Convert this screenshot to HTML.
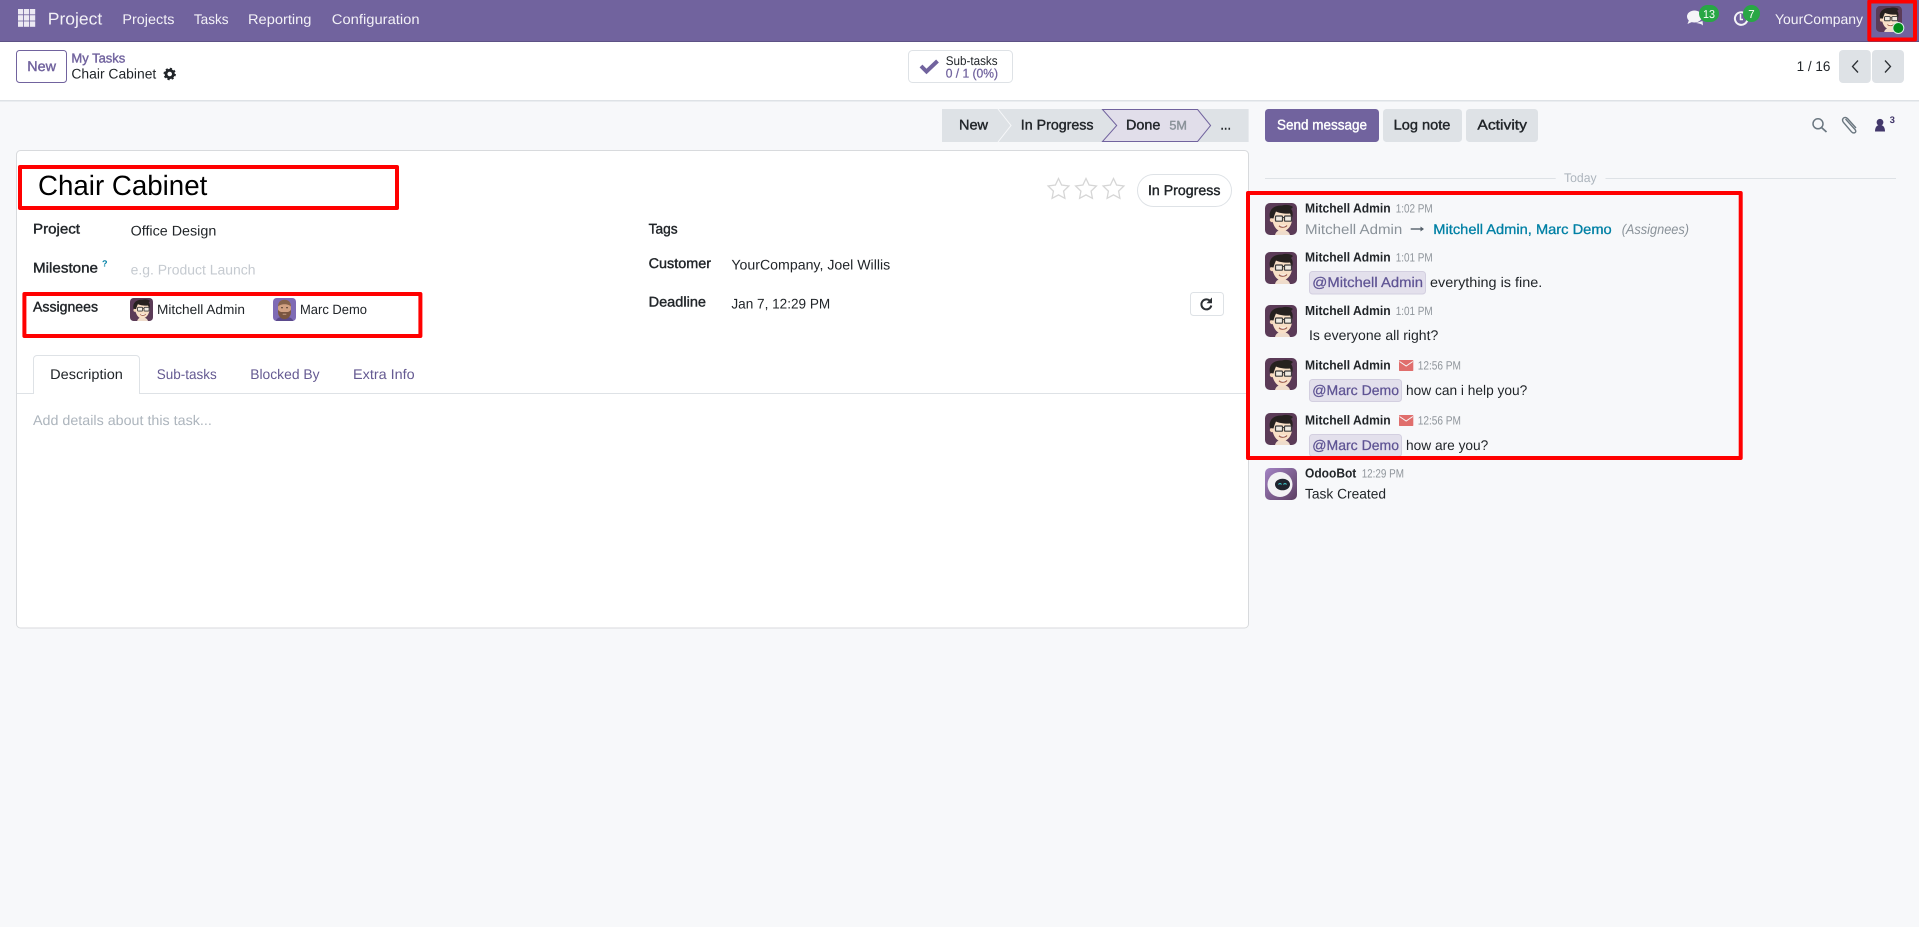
<!DOCTYPE html>
<html lang="en">
<head>
<meta charset="utf-8">
<title>Chair Cabinet - Project</title>
<style>
html,body{margin:0;padding:0;background:#f7f8fa;overflow:hidden;width:1919px;height:927px}
svg{display:block}
text{font-family:"Liberation Sans",sans-serif;font-size:14px;fill:#212529;white-space:pre;text-rendering:geometricPrecision}
.b{stroke:#212529;stroke-width:.4px}
.nav{fill:#f3f1f7;font-size:14px}
.p{fill:#71639e}
.p.b{stroke:#71639e}
.g{fill:#8a9299}
.g.b{stroke:#8a9299}
.w.b{fill:#fff;stroke:#fff}
.m{fill:#5f5494;stroke:#5f5494;stroke-width:.25px}
.t{font-size:12px;fill:#8f959b}
.n{font-size:13px;font-weight:700;fill:#212529}
</style>
</head>
<body>
<svg width="1919" height="927" viewBox="0 0 1919 927" xmlns="http://www.w3.org/2000/svg">
<defs>
<symbol id="mitchell" viewBox="0 0 32 32">
  <rect width="32" height="32" rx="5" fill="#5b3b57"/>
  <path d="M10 32 C11 28 14 27 17 27 C20 27 24 28 25 32 Z" fill="#efdccb"/>
  <circle cx="7" cy="17" r="2.200" fill="#f3d3b6"/>
  <path d="M7 13 C7 9 12 7 18 8 C24 8 27.500 10 27 16 C27 23 22 28.500 17 28.500 C11 28.500 7 21 7 13 Z" fill="#f8dfc6"/>
  <path d="M5 15 C3 7 9 2 17 2.500 C20 1.500 25 1.500 28 4 L26 6 C28 8 28 12 27 15 L25 10.500 C20 11 14 10 11 8.500 C10 11 9 13 8.500 15.500 Z" fill="#26211f"/>
  <rect x="10.500" y="13" width="7" height="5.200" rx="1" fill="#f0ebe2" stroke="#3b3b3b" stroke-width="1.200"/>
  <rect x="19.500" y="13" width="7" height="5.200" rx="1" fill="#f0ebe2" stroke="#3b3b3b" stroke-width="1.200"/>
  <path d="M17.500 14.500 H19.500" stroke="#3b3b3b" stroke-width="1"/>
  <path d="M14 22.800 C16 24.800 20 24.800 22 22.500" stroke="#9b5a4a" stroke-width="1.100" fill="#fff"/>
</symbol>
<symbol id="marc" viewBox="0 0 32 32">
  <rect width="32" height="32" rx="5" fill="#7f6bb5"/>
  <path d="M4 32 C5 27 11 26 16 26 C21 26 27 27 28 32 Z" fill="#5b4a8c"/>
  <path d="M7 12 C7 5 11 3 16 3 C21 3 25 5 25 12 L25 19 C25 25 20 29 16 29 C12 29 7 25 7 19 Z" fill="#d2a283"/>
  <path d="M7 16 C9 20 12 19.500 16 19.500 C20 19.500 23 20 25 16 L25 20 C25 26 20 29.500 16 29.500 C12 29.500 7 26 7 20 Z" fill="#7a5640"/>
  <path d="M7 12 C7 5 11 2.500 16 2.500 C21 2.500 25 5 25 12 C22 7.500 10 7.500 7 12 Z" fill="#85624b"/>
  <circle cx="12.500" cy="13.500" r="1" fill="#33231a"/><circle cx="19.500" cy="13.500" r="1" fill="#33231a"/>
  <path d="M13.500 22.500 H18.500" stroke="#e0b8a0" stroke-width="1"/>
</symbol>
<symbol id="bot" viewBox="0 0 32 32">
  <defs><linearGradient id="bg" x1="0" y1="0" x2="1" y2="1"><stop offset="0" stop-color="#a383c4"/><stop offset="1" stop-color="#5c3f62"/></linearGradient></defs>
  <rect width="32" height="32" rx="5" fill="url(#bg)"/>
  <circle cx="15" cy="16.500" r="12.500" fill="#f2f2f4"/>
  <ellipse cx="17.500" cy="16.500" rx="7.500" ry="5.800" fill="#20242e"/>
  <path d="M13.500 16.500 q1.500 -2 3 0 M18.500 16.500 q1.500 -2 3 0" stroke="#3cc5c9" stroke-width="1.100" fill="none"/>
</symbol>
<path id="star" d="M11 1 L14.100 7.500 L21.400 8.500 L16.100 13.600 L17.400 20.800 L11 17.400 L4.600 20.800 L5.900 13.600 L0.600 8.500 L7.900 7.500 Z"/>
<g id="mail"><rect width="14.300" height="11" rx="0.800" fill="#e06e6c"/><path d="M0.500 1.500 L7.150 6 L13.800 1.500" fill="none" stroke="#f7f8fa" stroke-width="1"/></g>
</defs>

<rect width="1919" height="927" fill="#f7f8fa"/>

<!-- Navbar -->
<rect width="1919" height="41" fill="#71639e"/>
<rect y="41" width="1919" height="1" fill="#5d5285"/>
<g fill="#ece9f3">
  <rect x="18" y="9" width="5.200" height="5.400"/><rect x="24" y="9" width="5.200" height="5.400"/><rect x="30" y="9" width="5.200" height="5.400"/>
  <rect x="18" y="15.200" width="5.200" height="5.400"/><rect x="24" y="15.200" width="5.200" height="5.400"/><rect x="30" y="15.200" width="5.200" height="5.400"/>
  <rect x="18" y="21.400" width="5.200" height="5.400"/><rect x="24" y="21.400" width="5.200" height="5.400"/><rect x="30" y="21.400" width="5.200" height="5.400"/>
</g>
<text class="nav" x="47.800" y="24.500" style="font-size:17px" textLength="54.500" lengthAdjust="spacingAndGlyphs">Project</text>
<text class="nav" x="122.400" y="24" textLength="52" lengthAdjust="spacingAndGlyphs">Projects</text>
<text class="nav" x="193.900" y="24" textLength="34.700" lengthAdjust="spacingAndGlyphs">Tasks</text>
<text class="nav" x="248" y="24" textLength="63.400" lengthAdjust="spacingAndGlyphs">Reporting</text>
<text class="nav" x="331.800" y="24" textLength="87.800" lengthAdjust="spacingAndGlyphs">Configuration</text>

<!-- Systray -->
<g fill="#f5f4f8">
  <ellipse cx="1694.500" cy="16.500" rx="7.500" ry="6"/>
  <path d="M1689 20 L1687.500 24 L1693 21.500 Z"/>
  <path d="M1696 23 C1699 23.500 1701 23.500 1703 25.500 L1702.500 21 Z"/>
</g>
<rect x="1699" y="5" width="20" height="17" rx="8.500" fill="#28a745"/>
<text x="1709" y="18" text-anchor="middle" style="font-size:11.500px;fill:#fff" textLength="12" lengthAdjust="spacingAndGlyphs">13</text>
<path d="M1745 13.500 A6.300 6.300 0 1 0 1747.500 19" fill="none" stroke="#f5f4f8" stroke-width="2"/>
<path d="M1740.500 14 V19.500 H1743" fill="none" stroke="#f5f4f8" stroke-width="1.500"/>
<rect x="1743" y="5" width="17" height="17" rx="8.500" fill="#28a745"/>
<text x="1751.500" y="18" text-anchor="middle" style="font-size:11.500px;fill:#fff">7</text>
<text class="nav" x="1775" y="24" textLength="88" lengthAdjust="spacingAndGlyphs">YourCompany</text>
<use href="#mitchell" x="1876" y="6" width="26" height="26"/>
<circle cx="1898.300" cy="28" r="5.500" fill="#018d1b" stroke="#d7efe5" stroke-width="1"/>

<!-- Control panel -->
<rect y="42" width="1919" height="58" fill="#fff"/>
<rect y="100" width="1919" height="1.500" fill="#dee2e6"/>
<rect x="16.500" y="50.500" width="50" height="32" rx="3" fill="#fff" stroke="#71639e"/>
<text class="p b" x="27.300" y="71" textLength="28.700" lengthAdjust="spacingAndGlyphs">New</text>
<text class="p b" x="71.400" y="62.700" style="font-size:13px" textLength="53.900" lengthAdjust="spacingAndGlyphs">My Tasks</text>
<text x="71.400" y="78.500" textLength="84.900" lengthAdjust="spacingAndGlyphs">Chair Cabinet</text>
<circle cx="169.700" cy="74" r="3.700" fill="none" stroke="#212529" stroke-width="2.800"/>
<circle cx="169.700" cy="74" r="5.300" fill="none" stroke="#212529" stroke-width="1.800" stroke-dasharray="2.100 2.060"/>

<rect x="908.500" y="50.500" width="104" height="32" rx="4" fill="#fff" stroke="#dee2e6"/>
<path d="M921 66 L926.500 71.500 L937.500 61" fill="none" stroke="#71639e" stroke-width="4"/>
<text x="945.700" y="65" style="font-size:12.500px" textLength="51.900" lengthAdjust="spacingAndGlyphs">Sub-tasks</text>
<text class="p" x="945.700" y="77.700" style="font-size:12.500px;stroke:#71639e;stroke-width:.25px" textLength="52.300" lengthAdjust="spacingAndGlyphs">0 / 1 (0%)</text>

<text x="1796.600" y="71" textLength="33.800" lengthAdjust="spacingAndGlyphs">1 / 16</text>
<rect x="1839" y="50" width="31.800" height="33" rx="4" ry="4" fill="#dee2e6"/>
<rect x="1872" y="50" width="32" height="33" rx="4" ry="4" fill="#dee2e6"/>
<path d="M1858 60.500 L1852.500 66.500 L1858 72.500" fill="none" stroke="#2b2f33" stroke-width="1.300"/>
<path d="M1885 60.500 L1890.500 66.500 L1885 72.500" fill="none" stroke="#2b2f33" stroke-width="1.300"/>

<!-- Status bar -->
<rect x="942" y="109" width="306.600" height="33" fill="#dee2e6"/>
<path d="M998 109 L1011 125.500 L998 142" fill="none" stroke="#f7f8fa" stroke-width="1"/>
<polygon points="1102.500,109.500 1197.600,109.500 1210.600,125.500 1197.600,141.500 1102.500,141.500 1116.700,125.500" fill="#e1deea" stroke="#71639e"/>
<text class="b" x="959" y="129.500" textLength="29" lengthAdjust="spacingAndGlyphs">New</text>
<text class="b" x="1020.800" y="129.500" textLength="72.700" lengthAdjust="spacingAndGlyphs">In Progress</text>
<text class="b" x="1126" y="129.500" textLength="34.400" lengthAdjust="spacingAndGlyphs">Done</text>
<text class="g b" x="1169.400" y="129.500" style="font-size:12.500px" textLength="17.600" lengthAdjust="spacingAndGlyphs">5M</text>
<text class="b" x="1220.400" y="129.500" textLength="10.600" lengthAdjust="spacingAndGlyphs">...</text>

<!-- Form sheet -->
<rect x="16.500" y="150.500" width="1232" height="477.500" rx="4" fill="#fff" stroke="#d8dadd"/>
<text x="38" y="195" style="font-size:28px;fill:#000" textLength="169.300" lengthAdjust="spacingAndGlyphs">Chair Cabinet</text>

<g fill="#fff" stroke="#d6d6d6" stroke-width="1.300">
  <use href="#star" x="1047.500" y="177.500"/>
  <use href="#star" x="1075" y="177.500"/>
  <use href="#star" x="1102.500" y="177.500"/>
</g>
<rect x="1137.500" y="174.500" width="94" height="32" rx="16" fill="#fff" stroke="#dee2e6"/>
<text class="b" x="1148" y="195" textLength="72.400" lengthAdjust="spacingAndGlyphs">In Progress</text>

<text class="b" x="33" y="233.500" textLength="47" lengthAdjust="spacingAndGlyphs">Project</text>
<text x="130.600" y="235.500" textLength="85.700" lengthAdjust="spacingAndGlyphs">Office Design</text>
<text class="b" x="33" y="272.700" textLength="65" lengthAdjust="spacingAndGlyphs">Milestone</text>
<text x="102" y="266.500" style="font-size:9px;font-weight:700;fill:#0180a5">?</text>
<text x="130.600" y="274.500" style="fill:#c5cad0" textLength="124.900" lengthAdjust="spacingAndGlyphs">e.g. Product Launch</text>
<text class="b" x="33" y="311.700" textLength="65" lengthAdjust="spacingAndGlyphs">Assignees</text>
<use href="#mitchell" x="130" y="298" width="23" height="23"/>
<text x="157" y="314" style="font-size:13.500px" textLength="88" lengthAdjust="spacingAndGlyphs">Mitchell Admin</text>
<use href="#marc" x="273" y="298" width="23" height="23"/>
<text x="300" y="314" style="font-size:13.500px" textLength="67" lengthAdjust="spacingAndGlyphs">Marc Demo</text>

<text class="b" x="648.600" y="233.300" textLength="29" lengthAdjust="spacingAndGlyphs">Tags</text>
<text class="b" x="648.600" y="268" textLength="62.400" lengthAdjust="spacingAndGlyphs">Customer</text>
<text x="731.400" y="269.500" textLength="158.800" lengthAdjust="spacingAndGlyphs">YourCompany, Joel Willis</text>
<text class="b" x="648.600" y="306.700" textLength="57.400" lengthAdjust="spacingAndGlyphs">Deadline</text>
<text x="731.400" y="308.700" textLength="98.800" lengthAdjust="spacingAndGlyphs">Jan 7, 12:29 PM</text>
<rect x="1190.500" y="292.500" width="33" height="23" rx="3" fill="#fff" stroke="#dee2e6"/>
<path d="M1210.500 301.500 A5 5 0 1 0 1211.300 305.500" fill="none" stroke="#2b2f33" stroke-width="2"/>
<path d="M1212 297.500 V303.200 H1206.500 Z" fill="#2b2f33"/>

<!-- Tabs -->
<rect x="17" y="393" width="1231" height="1" fill="#dee2e6"/>
<path d="M33.500 394 V359 a3.500 3.500 0 0 1 3.500 -3.500 H136 a3.500 3.500 0 0 1 3.500 3.500 V394" fill="#fff" stroke="#dee2e6"/>
<text x="50.200" y="379" textLength="72.700" lengthAdjust="spacingAndGlyphs">Description</text>
<text x="156.700" y="379" style="fill:#655a92" textLength="60" lengthAdjust="spacingAndGlyphs">Sub-tasks</text>
<text x="250.200" y="379" style="fill:#655a92" textLength="69.400" lengthAdjust="spacingAndGlyphs">Blocked By</text>
<text x="353" y="379" style="fill:#655a92" textLength="61.700" lengthAdjust="spacingAndGlyphs">Extra Info</text>
<text x="33" y="425" style="fill:#adb5bd" textLength="178.800" lengthAdjust="spacingAndGlyphs">Add details about this task...</text>

<!-- Chatter topbar -->
<rect x="1265" y="109" width="114" height="33" rx="3.500" fill="#71639e"/>
<text class="w b" x="1277" y="129.500" textLength="90" lengthAdjust="spacingAndGlyphs">Send message</text>
<rect x="1383" y="109" width="79" height="33" rx="3.500" fill="#dee2e6"/>
<text class="b" x="1393.700" y="129.500" textLength="56.700" lengthAdjust="spacingAndGlyphs">Log note</text>
<rect x="1466" y="109" width="72" height="33" rx="3.500" fill="#dee2e6"/>
<text class="b" x="1477.400" y="129.500" textLength="49.600" lengthAdjust="spacingAndGlyphs">Activity</text>

<circle cx="1818" cy="123.800" r="5" fill="none" stroke="#6b7780" stroke-width="1.500"/>
<path d="M1821.500 127.500 L1826.500 132" stroke="#6b7780" stroke-width="1.700"/>
<path d="M1845.500 119 L1855 129.500 C1857.500 132.500 1853.500 134 1851.500 131.800 L1843.500 122.500 C1841 119 1844.500 115.800 1847.500 118.500 L1856 128" fill="none" stroke="#6b7780" stroke-width="1.400"/>
<circle cx="1880" cy="122.300" r="3.400" fill="#43386b"/>
<path d="M1875 131.500 C1875 127 1877 125 1880 125 C1883 125 1885 127 1885 131.500 Z" fill="#43386b"/>
<text x="1889.600" y="123" style="font-size:9.500px;font-weight:700;fill:#43386b">3</text>

<!-- Today -->
<rect x="1265" y="178" width="290.700" height="1" fill="#dee2e6"/>
<rect x="1605.500" y="178" width="290.500" height="1" fill="#dee2e6"/>
<text x="1564" y="182" style="font-size:12.500px;fill:#adb5bd" textLength="32.600" lengthAdjust="spacingAndGlyphs">Today</text>

<!-- Messages -->
<use href="#mitchell" x="1265" y="203" width="32" height="32"/>
<text class="n" x="1305" y="212.700" textLength="85.700" lengthAdjust="spacingAndGlyphs">Mitchell Admin</text>
<text class="t" x="1395.700" y="212.700" textLength="37" lengthAdjust="spacingAndGlyphs">1:02 PM</text>
<text class="g" x="1305" y="234" textLength="97.300" lengthAdjust="spacingAndGlyphs">Mitchell Admin</text>
<path d="M1410.700 229 H1423" stroke="#55606a" stroke-width="1.400"/><path d="M1420.500 226.500 L1424 229 L1420.500 231.500 Z" fill="#55606a"/>
<text x="1433.300" y="234" style="fill:#0180a5;stroke:#0180a5;stroke-width:.3px" textLength="178.400" lengthAdjust="spacingAndGlyphs">Mitchell Admin, Marc Demo</text>
<text class="g" x="1621.700" y="234" style="font-style:italic" textLength="67.300" lengthAdjust="spacingAndGlyphs">(Assignees)</text>

<use href="#mitchell" x="1265" y="252" width="32" height="32"/>
<text class="n" x="1305" y="261.700" textLength="85.700" lengthAdjust="spacingAndGlyphs">Mitchell Admin</text>
<text class="t" x="1395.700" y="261.700" textLength="37" lengthAdjust="spacingAndGlyphs">1:01 PM</text>
<rect x="1309.500" y="271.500" width="116" height="22.500" rx="3" fill="#e3e0ec" stroke="#d3cfe0"/>
<text class="m" x="1312.300" y="287" textLength="110.700" lengthAdjust="spacingAndGlyphs">@Mitchell Admin</text>
<text x="1430" y="287" textLength="112.300" lengthAdjust="spacingAndGlyphs">everything is fine.</text>

<use href="#mitchell" x="1265" y="305" width="32" height="32"/>
<text class="n" x="1305" y="315" textLength="85.700" lengthAdjust="spacingAndGlyphs">Mitchell Admin</text>
<text class="t" x="1395.700" y="315" textLength="37" lengthAdjust="spacingAndGlyphs">1:01 PM</text>
<text x="1309" y="340" textLength="129.300" lengthAdjust="spacingAndGlyphs">Is everyone all right?</text>

<use href="#mitchell" x="1265" y="358" width="32" height="32"/>
<text class="n" x="1305" y="369.300" textLength="85.700" lengthAdjust="spacingAndGlyphs">Mitchell Admin</text>
<use href="#mail" x="1399" y="360"/>
<text class="t" x="1417.700" y="369.500" textLength="43.300" lengthAdjust="spacingAndGlyphs">12:56 PM</text>
<rect x="1309.500" y="379.500" width="92" height="22" rx="3" fill="#e3e0ec" stroke="#d3cfe0"/>
<text class="m" x="1312.300" y="395" textLength="86.700" lengthAdjust="spacingAndGlyphs">@Marc Demo</text>
<text x="1406" y="395" textLength="121.300" lengthAdjust="spacingAndGlyphs">how can i help you?</text>

<use href="#mitchell" x="1265" y="413" width="32" height="32"/>
<text class="n" x="1305" y="424.300" textLength="85.700" lengthAdjust="spacingAndGlyphs">Mitchell Admin</text>
<use href="#mail" x="1399" y="415"/>
<text class="t" x="1417.700" y="424.500" textLength="43.300" lengthAdjust="spacingAndGlyphs">12:56 PM</text>
<rect x="1309.500" y="434.500" width="92" height="22" rx="3" fill="#e3e0ec" stroke="#d3cfe0"/>
<text class="m" x="1312.300" y="450" textLength="86.700" lengthAdjust="spacingAndGlyphs">@Marc Demo</text>
<text x="1406" y="450" textLength="82.300" lengthAdjust="spacingAndGlyphs">how are you?</text>

<use href="#bot" x="1265" y="468" width="32" height="32"/>
<text class="n" x="1305" y="477.700" textLength="51.300" lengthAdjust="spacingAndGlyphs">OdooBot</text>
<text class="t" x="1361.700" y="477.700" textLength="42.300" lengthAdjust="spacingAndGlyphs">12:29 PM</text>
<text x="1305" y="498.300" textLength="81" lengthAdjust="spacingAndGlyphs">Task Created</text>

<!-- Red annotation boxes -->
<g fill="none" stroke="#ff0000" stroke-width="4" stroke-linejoin="round">
  <rect x="20" y="167" width="377" height="41"/>
  <rect x="24.400" y="294" width="396" height="42"/>
  <rect x="1248" y="193" width="492.700" height="265"/>
  <rect x="1869.300" y="1.500" width="45.700" height="38"/>
</g>
</svg>
</body>
</html>
